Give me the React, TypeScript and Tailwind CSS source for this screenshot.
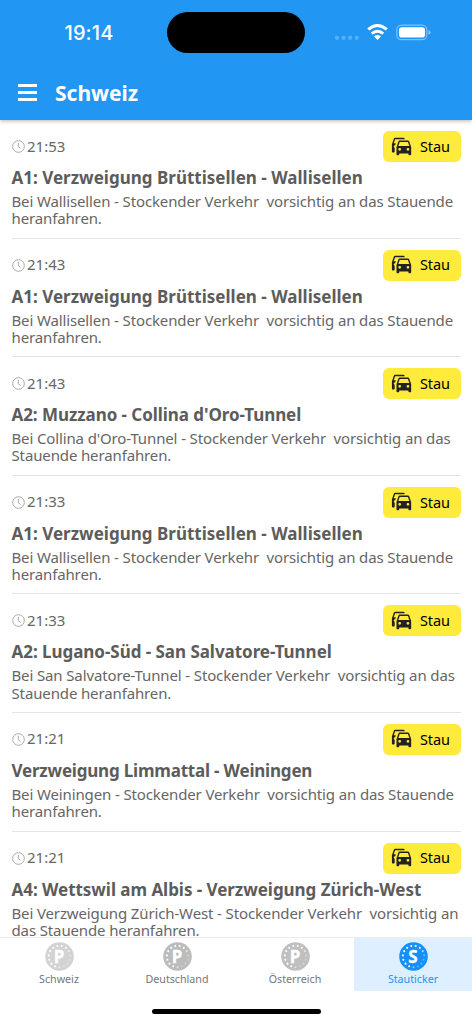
type Incident = { time: string; title: string; tracking: string; lines: [string, string] };

const incidents: Incident[] = [
  { time: '21:53', title: 'A1: Verzweigung Brüttisellen - Wallisellen', tracking: 'tracking-[0.01px]', lines: ['Bei Wallisellen - Stockender Verkehr  vorsichtig an das Stauende', 'heranfahren.'] },
  { time: '21:43', title: 'A1: Verzweigung Brüttisellen - Wallisellen', tracking: 'tracking-[0.01px]', lines: ['Bei Wallisellen - Stockender Verkehr  vorsichtig an das Stauende', 'heranfahren.'] },
  { time: '21:43', title: "A2: Muzzano - Collina d'Oro-Tunnel", tracking: 'tracking-[-0.06px]', lines: ["Bei Collina d'Oro-Tunnel - Stockender Verkehr  vorsichtig an das", 'Stauende heranfahren.'] },
  { time: '21:33', title: 'A1: Verzweigung Brüttisellen - Wallisellen', tracking: 'tracking-[0.01px]', lines: ['Bei Wallisellen - Stockender Verkehr  vorsichtig an das Stauende', 'heranfahren.'] },
  { time: '21:33', title: 'A2: Lugano-Süd - San Salvatore-Tunnel', tracking: 'tracking-[-0.04px]', lines: ['Bei San Salvatore-Tunnel - Stockender Verkehr  vorsichtig an das', 'Stauende heranfahren.'] },
  { time: '21:21', title: 'Verzweigung Limmattal - Weiningen', tracking: 'tracking-[-0.2px]', lines: ['Bei Weiningen - Stockender Verkehr  vorsichtig an das Stauende', 'heranfahren.'] },
  { time: '21:21', title: 'A4: Wettswil am Albis - Verzweigung Zürich-West', tracking: 'tracking-[-0.04px]', lines: ['Bei Verzweigung Zürich-West - Stockender Verkehr  vorsichtig an', 'das Stauende heranfahren.'] },
];

const tabs = [
  { label: 'Schweiz', letter: 'P', disc: 'text-[#d3d3d3]', active: false },
  { label: 'Deutschland', letter: 'P', disc: 'text-[#bcbcbc]', active: false },
  { label: 'Österreich', letter: 'P', disc: 'text-[#bfbfbf]', active: false },
  { label: 'Stauticker', letter: 'S', disc: 'text-[#1590fb]', active: true },
];

function Clock() {
  return (
    <svg className="size-[13px]" viewBox="0 0 13 13" fill="none" stroke="#a9a9a9" strokeWidth="1">
      <circle cx="6.5" cy="6.5" r="5.8" />
      <path d="M6.3 2.8v4l2.2 1.6" />
    </svg>
  );
}

function Cars() {
  return (
    <svg className="size-[22px]" viewBox="0 0 24 24" fill="#222">
      <path d="M8,11L9.5,6.5H18.5L20,11M18.5,16A1.5,1.5 0 0,1 17,14.5A1.5,1.5 0 0,1 18.5,13A1.5,1.5 0 0,1 20,14.5A1.5,1.5 0 0,1 18.5,16M9.5,16A1.5,1.5 0 0,1 8,14.5A1.5,1.5 0 0,1 9.5,13A1.5,1.5 0 0,1 11,14.5A1.5,1.5 0 0,1 9.5,16M19.92,6C19.71,5.4 19.14,5 18.5,5H9.5C8.86,5 8.29,5.4 8.08,6L6,12V20A1,1 0 0,0 7,21H8A1,1 0 0,0 9,20V19H19V20A1,1 0 0,0 20,21H21A1,1 0 0,0 22,20V12L19.92,6M14.92,3C14.71,2.4 14.14,2 13.5,2H4.5C3.86,2 3.29,2.4 3.08,3L1,9V17A1,1 0 0,0 2,18H3A1,1 0 0,0 4,17V12.91C3.22,12.63 2.82,11.77 3.1,11C3.32,10.4 3.87,10 4.5,10H4.57L5.27,8H3L4.5,3.5H15.09L14.92,3Z" />
    </svg>
  );
}

const dotOpacity = [1, 0.95, 0.6, 0.35, 0.3, 0.3, 0.3, 0.5, 1, 1, 1, 1, 1, 1, 1];
const dots = dotOpacity.map((opacity, i) => {
  const a = ((i * 24 + 12) * Math.PI) / 180;
  return { x: 14.5 + 10.7 * Math.sin(a), y: 14.5 - 10.7 * Math.cos(a), opacity };
});

function Disc({ letter, tone }: { letter: string; tone: string }) {
  return (
    <span className={`relative flex size-[29px] items-center justify-center ${tone}`}>
      <svg className="absolute inset-0 size-[29px]" viewBox="0 0 29 29">
        <circle cx="14.5" cy="14.5" r="14.3" fill="currentColor" />
        {dots.map((d, i) => (
          <circle key={i} cx={d.x} cy={d.y} r="1.05" fill="#fff" opacity={d.opacity} />
        ))}
      </svg>
      <span className="relative text-[17px] leading-none font-bold text-white [-webkit-text-stroke:0.3px_white]">{letter}</span>
    </span>
  );
}

function StatusBar() {
  return (
    <div className="grid h-[65px] grid-cols-[167px_138px_1fr] items-center">
      <div className="pl-[64.5px] font-['Inter'] text-[20px] leading-6 font-medium tracking-[0.1px] text-white">19:14</div>
      <div className="h-[41px] rounded-full bg-black" />
      <div className="flex items-center pl-[30px]">
        <svg className="h-[20px] w-[100px]" viewBox="0 0 100 20" fill="#fff">
          <g opacity="0.25">
            <circle cx="2" cy="14.8" r="2.1" />
            <circle cx="8.6" cy="14.8" r="2.1" />
            <circle cx="15.2" cy="14.8" r="2.1" />
            <circle cx="21.8" cy="14.8" r="2.1" />
          </g>
          <g fill="none" stroke="#fff" strokeWidth="3">
            <path d="M33.2 6.4 Q42.5-1.5 51.8 6.4" />
            <path d="M36.8 10.6 Q42.5 5.8 48.2 10.6" />
          </g>
          <path d="M39 13.4q3.5-2.9 7 0l-3.5 3.6z" />
          <rect x="61.8" y="2.1" width="30" height="14.6" rx="4.6" fill="none" stroke="#fff" strokeWidth="1.2" opacity="0.42" />
          <rect x="64" y="4.3" width="26" height="10.3" rx="2.8" />
          <path d="M93.5 7q2 .7 2 2.4t-2 2.4z" opacity="0.5" />
        </svg>
      </div>
    </div>
  );
}

export default function App() {
  return (
    <div className="flex h-[1024px] w-[472px] flex-col overflow-hidden bg-white font-['Noto_Sans',sans-serif]">
      <header className="relative z-10 h-[120px] shrink-0 bg-[#2196f3] shadow-[0_1px_4px_rgba(0,0,0,0.3)]">
        <StatusBar />
        <div className="flex h-[55px] items-center pl-[18px]">
          <div className="flex w-[19px] flex-col gap-[4px]">
            <i className="h-[3px] bg-white" />
            <i className="h-[3px] bg-white" />
            <i className="h-[3px] bg-white" />
          </div>
          <h1 className="ml-[18px] text-[21px] leading-6 font-bold text-white">Schweiz</h1>
        </div>
      </header>

      <main className="h-[817px] shrink-0 overflow-hidden px-[11.5px]">
        {incidents.map((item, i) => (
          <article key={i} className="h-[118.6px] border-b border-[#e4e4e4] pt-[11px] whitespace-pre text-[#666]">
            <div className="flex h-[31px] items-center justify-between">
              <div className="flex items-center gap-[2.5px]">
                <Clock />
                <span className="-mt-[2px] text-[15px] leading-5">{item.time}</span>
              </div>
              <div className="flex h-[31px] w-[78px] items-center rounded-[6px] bg-[#ffeb3b] pl-[8.5px] text-black">
                <Cars />
                <span className="-mt-[1.5px] ml-[7px] text-[14.5px] leading-5 tracking-[-0.1px]">Stau</span>
              </div>
            </div>
            <h2 className={`mt-[4px] text-[17px] leading-[24px] font-bold text-[#5c5c5c] ${item.tracking}`}>{item.title}</h2>
            <p className="mt-[3px] text-[15px] leading-[17.3px] tracking-[-0.13px]">
              {item.lines.join('\n')}
            </p>
          </article>
        ))}
      </main>

      <footer className="relative z-10 h-[87px] shrink-0 border-t border-[#ececec] bg-white">
        <nav className="grid h-[53px] grid-cols-4">
          {tabs.map((t) => (
            <div key={t.label} className={`flex flex-col items-center pt-[4px] ${t.active ? 'bg-[#deefff] text-[#2196f3]' : 'text-[#777]'}`}>
              <Disc letter={t.letter} tone={t.disc} />
              <span className="text-[10.7px] leading-4">{t.label}</span>
            </div>
          ))}
        </nav>
        <div className="mx-auto mt-[18px] h-[5px] w-[169px] rounded-full bg-black" />
      </footer>
    </div>
  );
}
